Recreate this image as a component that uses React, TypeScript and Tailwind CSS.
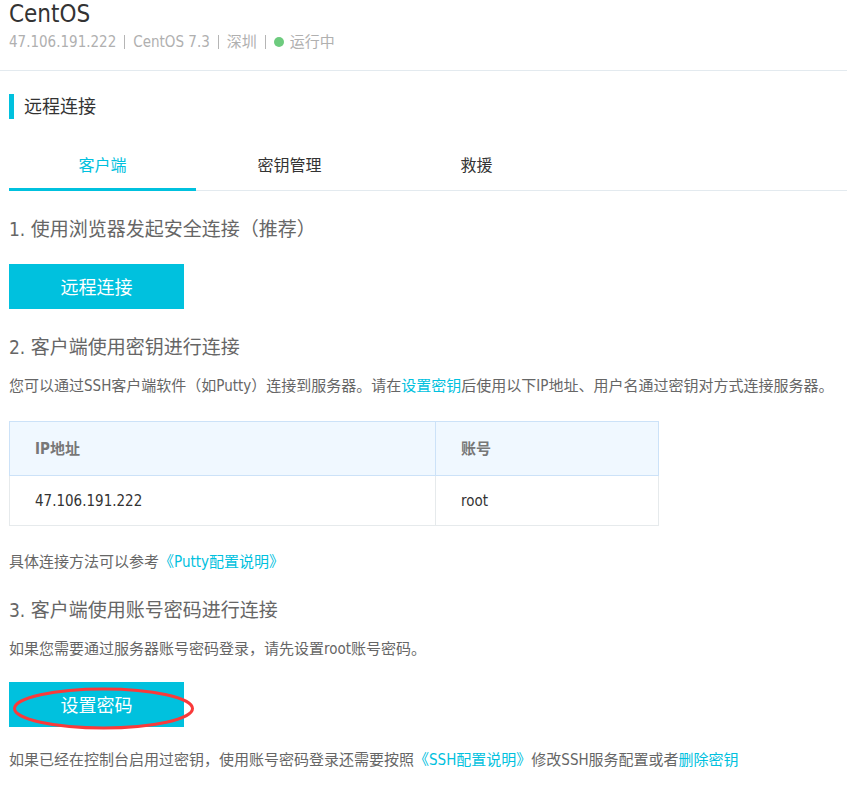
import { useState, type ReactNode } from 'react';

const tabs = ['客户端', '密钥管理', '救援'];

function Separator() {
  return <span className="h-3.5 w-px bg-[#b5b5b5]" aria-hidden="true" />;
}

function StepTitle({ children }: { children: ReactNode }) {
  return <h3 className="text-[19px] leading-7 text-[#666]">{children}</h3>;
}

function Link({ children }: { children: ReactNode }) {
  return (
    <a href="#" className="text-[#00c1de] hover:underline">
      {children}
    </a>
  );
}

function PrimaryButton({ children }: { children: ReactNode }) {
  return (
    <button type="button" className="block h-[45px] w-[175px] bg-[#00c1de] pt-0.5 text-lg text-white">
      {children}
    </button>
  );
}

export default function App() {
  const [active, setActive] = useState(0);

  return (
    <main className="bg-white pb-4 font-['DejaVu_Sans_Condensed','Noto_Sans_CJK_SC',sans-serif] text-[15px] leading-6 text-[#666]">
      <header className="border-b border-[#e3eaef] pb-4 pl-[9px]">
        <h1 className="text-2xl leading-7 text-[#333]">CentOS</h1>
        <div className="mt-0.5 flex items-center gap-2 text-[#b0b0b0]">
          <span>47.106.191.222</span>
          <Separator />
          <span>CentOS 7.3</span>
          <Separator />
          <span>深圳</span>
          <Separator />
          <span className="flex items-center gap-1.5">
            <span className="size-2.5 rounded-full bg-[#6dcb7e]" />
            运行中
          </span>
        </div>
      </header>

      <section className="pl-[9px] pt-[23px]">
        <h2 className="border-l-5 border-[#00c1de] pl-2.5 text-lg leading-[25px] text-[#333]">远程连接</h2>

        <div role="tablist" className="mt-[22px] flex h-[50px] border-b border-[#e3eaef] text-base">
          {tabs.map((tab, index) => (
            <button
              key={tab}
              type="button"
              role="tab"
              aria-selected={index === active}
              onClick={() => setActive(index)}
              className={
                index === active
                  ? 'h-[50px] w-[187px] border-b-3 border-[#00c1de] pt-[3px] text-[#00c1de]'
                  : 'h-[50px] w-[187px] border-b-3 border-transparent pt-[3px] text-[#333]'
              }
            >
              {tab}
            </button>
          ))}
        </div>

        <div className="mt-6">
          <StepTitle>1. 使用浏览器发起安全连接（推荐）</StepTitle>
          <div className="mt-[21px]">
            <PrimaryButton>远程连接</PrimaryButton>
          </div>
        </div>

        <div className="mt-6">
          <StepTitle>2. 客户端使用密钥进行连接</StepTitle>
          <p className="mt-[13px]">
            您可以通过SSH客户端软件（如Putty）连接到服务器。请在<Link>设置密钥</Link>
            后使用以下IP地址、用户名通过密钥对方式连接服务器。
          </p>
          <table className="mt-[23px] w-full max-w-[650px] table-fixed border-collapse text-left">
            <thead>
              <tr className="h-[54px] bg-[#f0f8ff] text-[#777]">
                <th scope="col" className="w-[426px] border border-[#cce2f8] px-[25px] font-bold">
                  IP地址
                </th>
                <th scope="col" className="border border-[#cce2f8] px-[25px] font-bold">
                  账号
                </th>
              </tr>
            </thead>
            <tbody>
              <tr className="h-[50px] text-[#333]">
                <td className="border border-[#e6eaec] px-[25px]">47.106.191.222</td>
                <td className="border border-[#e6eaec] px-[25px]">root</td>
              </tr>
            </tbody>
          </table>
          <p className="mt-6">
            具体连接方法可以参考<Link>《Putty配置说明》</Link>
          </p>
        </div>

        <div className="mt-[22px]">
          <StepTitle>3. 客户端使用账号密码进行连接</StepTitle>
          <p className="mt-[13px]">如果您需要通过服务器账号密码登录，请先设置root账号密码。</p>
          <div className="relative mt-[21px]">
            <PrimaryButton>设置密码</PrimaryButton>
            <svg
              className="pointer-events-none absolute left-1 top-1"
              width="182"
              height="44"
              viewBox="0 0 182 44"
              fill="none"
              aria-hidden="true"
            >
              <ellipse cx="90.5" cy="22.5" rx="89" ry="19.5" stroke="#f93a3a" strokeWidth="3" />
            </svg>
          </div>
          <p className="mt-[21px]">
            如果已经在控制台启用过密钥，使用账号密码登录还需要按照<Link>《SSH配置说明》</Link>
            修改SSH服务配置或者<Link>删除密钥</Link>
          </p>
        </div>
      </section>
    </main>
  );
}
